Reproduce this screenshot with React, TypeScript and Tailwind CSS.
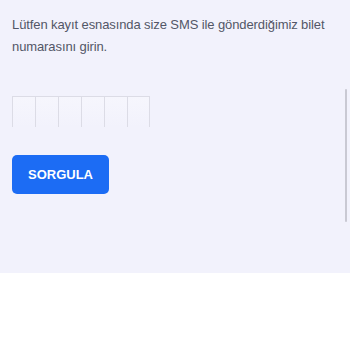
export default function App() {
  const cells = [0, 1, 2, 3, 4, 5];
  return (
    <div className="w-[350px] h-[350px] bg-white" style={{ fontFamily: '"Liberation Sans", Arial, sans-serif' }}>
      <div className="relative h-[273px] bg-[#f2f2fc] px-3 pt-[14px]">
        <p className="text-[13px] leading-[22px] tracking-[-0.1px] text-[#525767]">
          Lütfen kayıt esnasında size SMS ile gönderdiğimiz bilet numarasını girin.
        </p>
        <div className="mt-[38px] flex">
          {cells.map((i) => (
            <div
              key={i}
              className={`h-[31px] w-[23px] border-t border-l border-[#dcdce6] bg-gradient-to-b from-[#f6f6fd] to-[#f2f2fc] ${i === 5 ? 'border-r' : ''}`}
            />
          ))}
        </div>
        <button className="mt-[28px] h-[39px] w-[97px] rounded-[5px] bg-[#1c6cf4] text-[13px] font-bold text-white">
          SORGULA
        </button>
        <div className="absolute right-[3px] top-[89px] h-[133px] w-[2px] rounded bg-[#c9c9d3]" />
      </div>
    </div>
  );
}
